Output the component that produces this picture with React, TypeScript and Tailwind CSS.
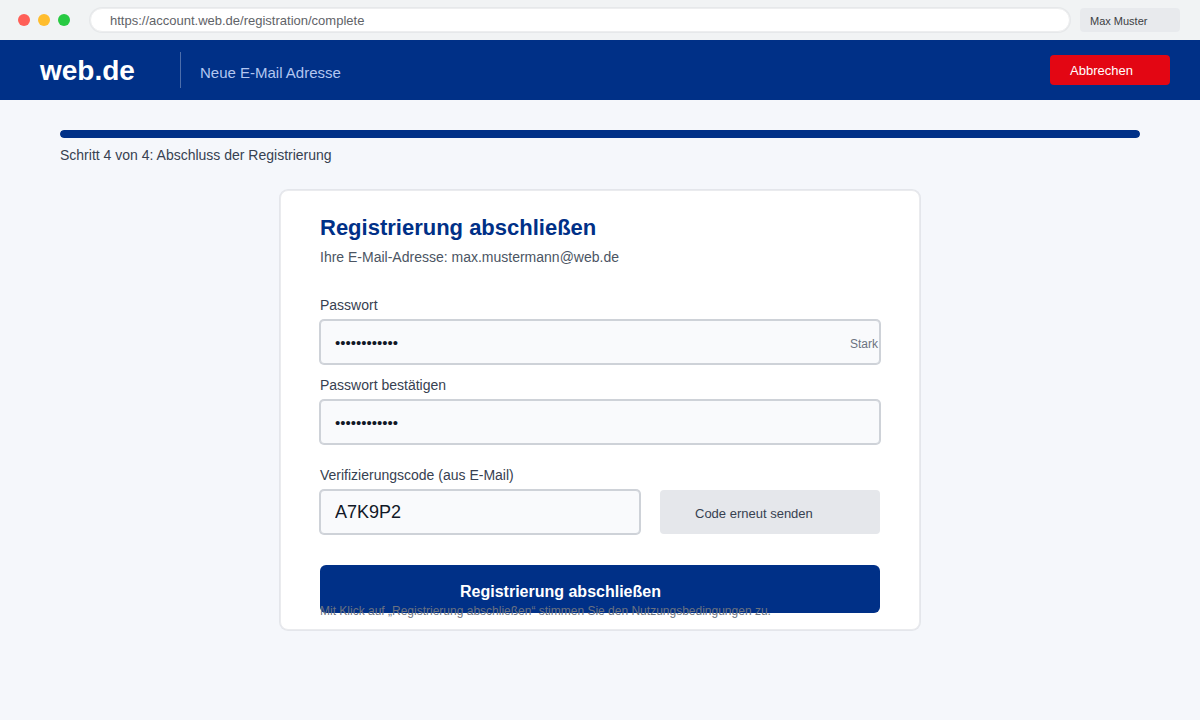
import { useState } from "react";

const inputClass =
  "block h-11 w-full rounded border border-[#ced2d8] bg-[#f9fafc] px-3.5 text-[#111827] outline-none ring-1 ring-[#ced2d8]";
const labelClass = "block text-sm leading-5 text-[#374151]";

function BrowserBar() {
  return (
    <div className="flex h-10 items-center bg-[#f1f3f4] pr-5 pl-[18px]">
      <div className="flex gap-2">
        <span className="size-3 rounded-full bg-[#ff5f57]" />
        <span className="size-3 rounded-full bg-[#ffbd2e]" />
        <span className="size-3 rounded-full bg-[#28ca42]" />
      </div>
      <input
        type="text"
        aria-label="Adresse"
        readOnly
        value="https://account.web.de/registration/complete"
        className="ml-5 h-6 min-w-0 flex-1 rounded-full border border-[#edeeef] bg-white px-[19px] text-[13px] text-[#5f6368] outline-none ring-1 ring-[#e6e8ea]"
      />
      <button type="button" className="ml-2.5 h-6 w-[100px] rounded bg-[#e8eaed] pt-0.5 pl-2.5 text-left text-[11px] text-[#3c4043]">
        Max Muster
      </button>
    </div>
  );
}

function Header() {
  return (
    <header className="flex h-[60px] items-center bg-[#003087] pr-[30px] pl-10">
      <div className="w-[140px] pt-0.5 text-[28px] leading-8 font-bold text-white">web.de</div>
      <div className="flex h-9 items-center border-l border-[#4d6eab] pt-1.5 pl-[19px] text-[15px] text-[#b3c6f0]">
        Neue E-Mail Adresse
      </div>
      <button type="button" className="ml-auto h-[30px] w-[120px] rounded bg-[#e30613] pt-0.5 pl-5 text-left text-[13px] text-white">
        Abbrechen
      </button>
    </header>
  );
}

function StepProgress({ step, total }: { step: number; total: number }) {
  return (
    <div>
      <div
        role="progressbar"
        aria-label="Fortschritt"
        aria-valuenow={step}
        aria-valuemin={0}
        aria-valuemax={total}
        className="h-2 overflow-hidden rounded-full bg-gray-200"
      >
        <div className="h-full rounded-full bg-[#003087]" style={{ width: `${(step / total) * 100}%` }} />
      </div>
      <p className="mt-[7px] text-sm leading-5 text-[#374151]">
        Schritt {step} von {total}: Abschluss der Registrierung
      </p>
    </div>
  );
}

export default function App() {
  const [password, setPassword] = useState("geheim123456");
  const [confirm, setConfirm] = useState("geheim123456");
  const [code, setCode] = useState("A7K9P2");

  return (
    <div className="min-h-screen bg-[#f5f7fb] font-['Liberation_Sans',Arial,sans-serif]">
      <BrowserBar />
      <Header />
      <main className="px-[60px] pt-[30px] pb-10">
        <StepProgress step={4} total={4} />

        <form
          onSubmit={(e) => e.preventDefault()}
          className="mx-auto mt-[25px] max-w-[640px] rounded-lg border border-[#eaebee] bg-white px-[39px] pt-[23px] pb-2.5 ring-1 ring-[#e4e6eb]"
        >
          <h1 className="text-[22px] leading-7 font-bold text-[#003087]">Registrierung abschließen</h1>
          <p className="mt-[5px] text-sm leading-5 text-[#4b5563]">Ihre E-Mail-Adresse: max.mustermann@web.de</p>

          <label htmlFor="password" className={`${labelClass} mt-7`}>
            Passwort
          </label>
          <div className="relative mt-[5px]">
            <input
              id="password"
              type="password"
              value={password}
              onChange={(e) => setPassword(e.target.value)}
              className={`${inputClass} text-[15px]`}
            />
            <span className="absolute inset-y-0 right-0.5 flex items-center pt-1 text-xs text-[#6b7280]">Stark</span>
          </div>

          <label htmlFor="confirm" className={`${labelClass} mt-[11px]`}>
            Passwort bestätigen
          </label>
          <div className="mt-[5px]">
            <input
              id="confirm"
              type="password"
              value={confirm}
              onChange={(e) => setConfirm(e.target.value)}
              className={`${inputClass} text-[15px]`}
            />
          </div>

          <label htmlFor="code" className={`${labelClass} mt-[21px]`}>
            Verifizierungscode (aus E-Mail)
          </label>
          <div className="mt-[5px] flex gap-5">
            <div className="min-w-0 flex-1">
              <input
                id="code"
                type="text"
                value={code}
                onChange={(e) => setCode(e.target.value)}
                className={`${inputClass} text-lg`}
              />
            </div>
            <button type="button" className="h-11 w-[220px] rounded bg-[#e5e7eb] pt-1 pl-[35px] text-left text-[13px] text-[#374151]">
              Code erneut senden
            </button>
          </div>

          <button type="submit" className="mt-[31px] block h-12 w-full rounded-md bg-[#003087] pt-1.5 pl-[140px] text-left text-base font-bold text-white">
            Registrierung abschließen
          </button>
          <p className="relative -mt-2.5 text-xs leading-4 text-[#6b7280]">
            Mit Klick auf „Registrierung abschließen“ stimmen Sie den Nutzungsbedingungen zu.
          </p>
        </form>
      </main>
    </div>
  );
}
